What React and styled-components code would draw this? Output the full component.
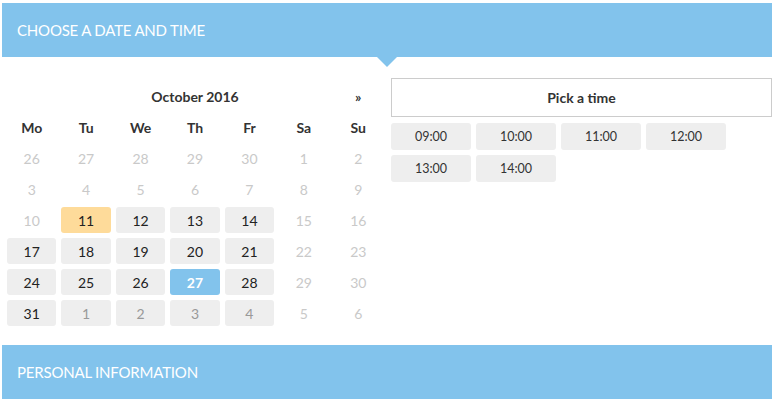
import React from "react";
import styled, { createGlobalStyle } from "styled-components";

const Global = createGlobalStyle`
  html, body { margin: 0; padding: 0; background: #fff; }
  body { font-family: Lato, "Open Sans", "Liberation Sans", sans-serif; color: #333; }
`;

const Page = styled.div`
  width: 770px;
  margin: 3px 0 0 2px;
`;

const SectionHeader = styled.div`
  position: relative;
  height: 54px;
  background: #82c3ec;
  color: #fff;
  display: flex;
  align-items: center;
  padding-left: 15px;
  font-size: 15px;
  font-weight: 400;
  text-transform: uppercase;
  letter-spacing: -0.2px;
  ${(p) =>
    p.$arrow &&
    `
    &::after {
      content: "";
      position: absolute;
      left: 375px;
      top: 54px;
      border-left: 10px solid transparent;
      border-right: 10px solid transparent;
      border-top: 10px solid #82c3ec;
    }
  `}
`;

const Body = styled.div`
  display: grid;
  grid-template-columns: 385px 381px;
  column-gap: 4px;
  padding: 21px 0 19px;
`;

const Calendar = styled.div`
  display: grid;
  grid-template-columns: repeat(7, 1fr);
  column-gap: 5px;
  row-gap: 5px;
  width: 376px;
  margin-left: 5px;
  padding-top: 5px;
`;

const Cell = styled.div`
  height: 26px;
  display: flex;
  align-items: center;
  justify-content: center;
  font-size: 14px;
  border-radius: 3px;
  grid-column: ${(p) => p.$span || "auto"};
  font-weight: ${(p) => (p.$bold ? 700 : 400)};
  color: #333;
`;

const Day = styled(Cell)`
  color: ${(p) =>
    p.$kind === "disabled" ? "#c9c9c9" : p.$kind === "new" ? "#999" : p.$kind === "active" ? "#fff" : "#222"};
  font-weight: ${(p) => (p.$kind === "active" ? 700 : 400)};
  background: ${(p) =>
    p.$kind === "today"
      ? "#fedb9a"
      : p.$kind === "active"
      ? "#82c3ec"
      : p.$kind === "disabled"
      ? "transparent"
      : "#eee"};
`;

const TimeCol = styled.div`
  display: flex;
  flex-direction: column;
  gap: 5px;
`;

const TimeTitle = styled.div`
  height: 37px;
  border: 1px solid #ccc;
  display: flex;
  align-items: center;
  justify-content: center;
  font-weight: 700;
  font-size: 14px;
  color: #333;
  margin-bottom: 1px;
`;

const Slots = styled.div`
  display: grid;
  grid-template-columns: repeat(4, 80px);
  gap: 5px;
`;

const Slot = styled.div`
  height: 27px;
  background: #eee;
  border-radius: 3px;
  display: flex;
  align-items: center;
  justify-content: center;
  font-size: 12.5px;
  color: #333;
`;

const weeks = [
  [["26", "disabled"], ["27", "disabled"], ["28", "disabled"], ["29", "disabled"], ["30", "disabled"], ["1", "disabled"], ["2", "disabled"]],
  [["3", "disabled"], ["4", "disabled"], ["5", "disabled"], ["6", "disabled"], ["7", "disabled"], ["8", "disabled"], ["9", "disabled"]],
  [["10", "disabled"], ["11", "today"], ["12"], ["13"], ["14"], ["15", "disabled"], ["16", "disabled"]],
  [["17"], ["18"], ["19"], ["20"], ["21"], ["22", "disabled"], ["23", "disabled"]],
  [["24"], ["25"], ["26"], ["27", "active"], ["28"], ["29", "disabled"], ["30", "disabled"]],
  [["31"], ["1", "new"], ["2", "new"], ["3", "new"], ["4", "new"], ["5", "disabled"], ["6", "disabled"]],
];

const dow = ["Mo", "Tu", "We", "Th", "Fr", "Sa", "Su"];
const times = ["09:00", "10:00", "11:00", "12:00", "13:00", "14:00"];

export default function App() {
  return (
    <Page>
      <Global />
      <SectionHeader $arrow>Choose a date and time</SectionHeader>
      <Body>
        <Calendar>
          <Cell />
          <Cell $span="span 5" $bold>October 2016</Cell>
          <Cell $bold>»</Cell>
          {dow.map((d) => (
            <Cell key={d} $bold>{d}</Cell>
          ))}
          {weeks.flat().map(([n, k], i) => (
            <Day key={i} $kind={k}>{n}</Day>
          ))}
        </Calendar>
        <TimeCol>
          <TimeTitle>Pick a time</TimeTitle>
          <Slots>
            {times.map((t) => (
              <Slot key={t}>{t}</Slot>
            ))}
          </Slots>
        </TimeCol>
      </Body>
      <SectionHeader>Personal information</SectionHeader>
    </Page>
  );
}
